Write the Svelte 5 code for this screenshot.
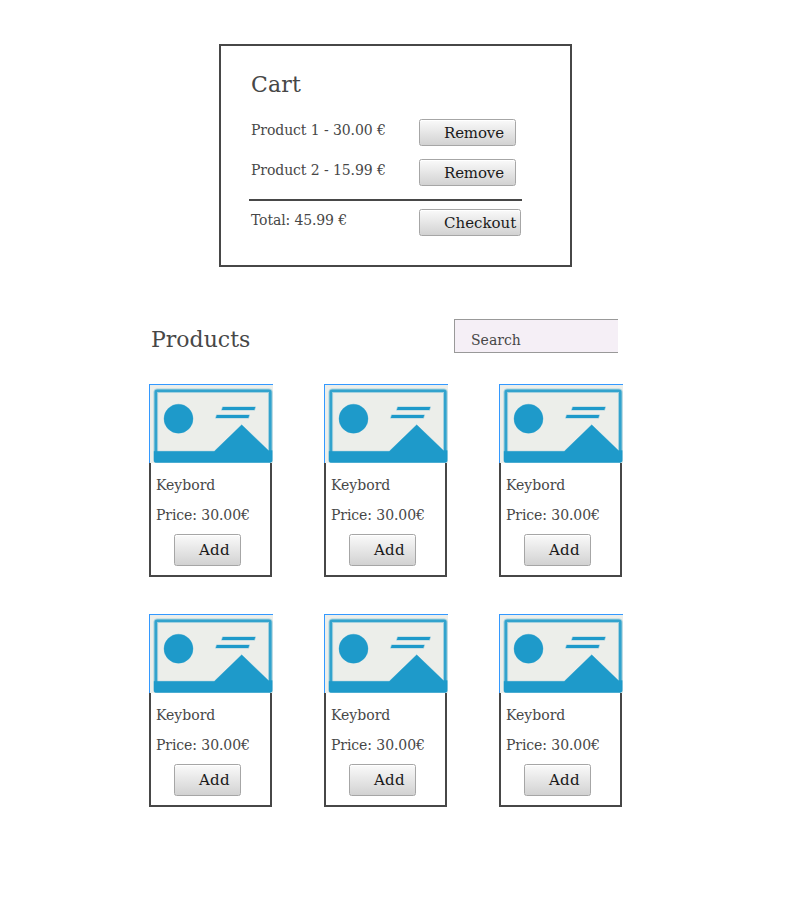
<script>
  const cart = [
    { name: 'Product 1', price: '30.00' },
    { name: 'Product 2', price: '15.99' }
  ];
  const products = Array.from({ length: 6 }, (_, id) => ({ id, name: 'Keybord', price: '30.00' }));
</script>

<main>
  <section class="cart">
    <h2>Cart</h2>
    {#each cart as item}
      <div class="row">
        <span>{item.name} - {item.price} €</span>
        <button class="remove">Remove</button>
      </div>
    {/each}
    <div class="row total">
      <span>Total: 45.99 €</span>
      <button class="checkout">Checkout</button>
    </div>
  </section>

  <header>
    <h2>Products</h2>
    <div class="search">Search</div>
  </header>

  <section class="grid">
    {#each products as product (product.id)}
      <article>
        <div class="picture">
          <svg viewBox="1 1 123 78">
            <rect x="6.8" y="6.7" width="114.5" height="70" rx="1.5" fill="none" stroke="#1e9aca" stroke-opacity=".35" stroke-width="4.6" />
            <rect x="6.8" y="6.7" width="114.5" height="70" rx="1.5" fill="none" stroke="#1e9aca" stroke-opacity=".85" stroke-width="2.6" />
            <path d="M5 67.3H65.3L92.7 40.8L119.5 66.5H123.2V77Q123.2 78.4 121.5 78.4H6.5Q5 78.4 5 77Z" fill="#1e9aca" stroke="#1e9aca" stroke-opacity=".35" />
            <circle cx="29.5" cy="34.7" r="14.5" fill="#1e9aca" stroke="#1e9aca" stroke-opacity=".35" />
            <path d="M73.8 23.1H106.3L105.3 25.9H72.8ZM67.8 31.1H100.3L99.3 33.9H66.8Z" fill="#1e9aca" stroke="#1e9aca" stroke-opacity=".35" stroke-width="1.4" stroke-linejoin="round" />
          </svg>
        </div>
        <div class="body">
          <p>{product.name}</p>
          <p class="price">Price: {product.price}€</p>
          <button class="add">Add</button>
        </div>
      </article>
    {/each}
  </section>
</main>

<style>
  :global(body) {
    background: #fff;
  }
  main {
    box-sizing: border-box;
    width: 796px;
    height: 909px;
    padding: 44px 0 0 149px;
    font: 14px/20px 'DejaVu Serif', serif;
    color: #474747;
  }
  h2 {
    margin: 0;
    font-size: 22px;
    line-height: 30px;
    font-weight: 400;
  }
  .cart {
    box-sizing: border-box;
    width: 353px;
    height: 223px;
    margin-left: 70px;
    padding: 24px 0 0 28px;
    border: 2px solid #474747;
  }
  .cart h2 {
    margin: 0 0 19px 2px;
    letter-spacing: 0.2px;
  }
  .row {
    display: flex;
    align-items: flex-start;
    width: 273px;
    height: 40px;
  }
  .row span {
    width: 168px;
    padding: 1px 0 0 2px;
    box-sizing: border-box;
    margin-right: 2px;
    white-space: nowrap;
    letter-spacing: -0.09px;
  }
  .total {
    border-top: 2px solid #474747;
    padding-top: 8px;
  }
  .total span {
    letter-spacing: -0.13px;
  }
  button {
    box-sizing: border-box;
    flex: none;
    height: 27px;
    padding: 1px 0 0 24px;
    border: 1px solid #a6a6a6;
    border-radius: 2.5px;
    background: linear-gradient(#fafafa, #d2d2d2);
    box-shadow: inset 0 1px #fff;
    font: 15px/24px 'DejaVu Serif', serif;
    color: #1a1a1a;
    text-align: left;
    white-space: nowrap;
  }
  .remove {
    width: 97px;
    letter-spacing: -0.15px;
  }
  .checkout {
    width: 102px;
  }
  header {
    display: flex;
    justify-content: space-between;
    width: 469px;
    height: 34px;
    margin-top: 52px;
  }
  header h2 {
    padding: 6px 0 0 2px;
  }
  .search {
    box-sizing: border-box;
    width: 164px;
    height: 34px;
    padding: 10px 0 0 16px;
    border: 1px solid #999;
    border-right: 0;
    background: #f5eff6;
  }
  .grid {
    display: grid;
    grid-template-columns: repeat(3, 123px);
    gap: 37px 52px;
    margin-top: 31px;
  }
  article {
    height: 193px;
  }
  .picture {
    box-sizing: border-box;
    width: 124px;
    height: 79px;
    overflow: hidden;
    border: solid #3399ff;
    border-width: 1px 0 0 1px;
    background: #eceeea;
  }
  svg {
    display: block;
    width: 123px;
    height: 78px;
    filter: blur(0.4px);
  }
  .body {
    box-sizing: border-box;
    height: 114px;
    padding: 12px 0 0 5px;
    border: solid #474747;
    border-width: 0 2px 2px;
  }
  p {
    margin: 0 0 10px;
    white-space: nowrap;
  }
  .price {
    letter-spacing: -0.08px;
  }
  .add {
    display: block;
    width: 67px;
    height: 32px;
    margin: -1px 0 0 18px;
    padding-top: 0;
    line-height: 30px;
    letter-spacing: 0.25px;
  }
</style>
